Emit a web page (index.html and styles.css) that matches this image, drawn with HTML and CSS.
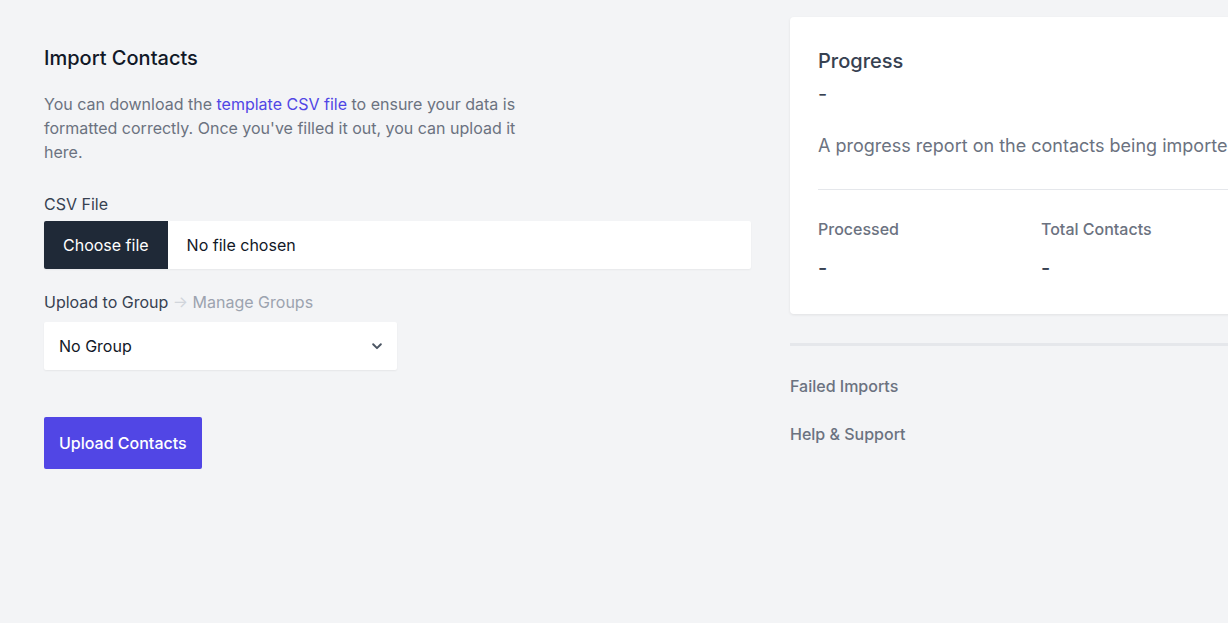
FILE: index.html
```html
<!DOCTYPE html>
<html>
<head>
<meta charset="utf-8">
<link rel="stylesheet" href="styles.css">
</head>
<body>
<div class="page">
  <main class="main">
    <h1 class="title">Import Contacts</h1>
    <p class="intro">You can download the <a class="link" href="#">template CSV file</a> to ensure your data is formatted correctly. Once you've filled it out, you can upload it here.</p>
    <div class="field field-csv">
      <div class="label">CSV File</div>
      <div class="file">
        <span class="file-btn">Choose file</span>
        <span class="file-name">No file chosen</span>
      </div>
    </div>
    <div class="field field-group">
      <div class="label label-group">Upload to Group <span class="arrow">&rarr;</span> <a class="manage" href="#">Manage Groups</a></div>
      <div class="select">
        <span>No Group</span>
        <svg class="chev" width="14" height="14" viewBox="0 0 20 20"><path d="M4.5 7.5l5.5 5.5 5.5-5.5" fill="none" stroke="#4b5563" stroke-width="2.8" stroke-linecap="round" stroke-linejoin="round"/></svg>
      </div>
    </div>
    <button class="upload">Upload Contacts</button>
  </main>
  <aside class="side">
    <section class="card">
      <h2 class="card-title">Progress</h2>
      <div class="card-dash">-</div>
      <p class="card-desc">A progress report on the contacts being imported.</p>
      <div class="stats">
        <div class="stat">
          <div class="stat-label">Processed</div>
          <div class="stat-value">-</div>
        </div>
        <div class="stat">
          <div class="stat-label">Total Contacts</div>
          <div class="stat-value">-</div>
        </div>
      </div>
    </section>
    <nav class="links">
      <a href="#" class="side-link">Failed Imports</a>
      <a href="#" class="side-link">Help &amp; Support</a>
    </nav>
  </aside>
</div>
</body>
</html>
```

FILE: styles.css
```css
html, body {
  margin: 0;
  padding: 0;
  background: #f3f4f6;
  overflow: hidden;
  width: 1228px;
  height: 623px;
}
body {
  font-family: "Inter", "Noto Sans", sans-serif;
  color: #374151;
}
.page {
  display: flex;
  gap: 39px;
  padding-left: 44px;
  width: 1600px;
}
.main {
  width: 707px;
  flex: none;
  padding-top: 44px;
}
.title {
  margin: 0;
  font-size: 20px;
  line-height: 28px;
  font-weight: 500;
  color: #111827;
}
.intro {
  margin: 20px 0 0;
  width: 480px;
  font-size: 16px;
  line-height: 24px;
  color: #6b7280;
}
.link {
  color: #5046e5;
  text-decoration: none;
}
.field-csv {
  margin-top: 28px;
}
.label {
  font-size: 16px;
  line-height: 24px;
  color: #374151;
  margin-bottom: 5px;
}
.label-group {
  margin-bottom: 8px;
}
.arrow {
  color: #d1d5db;
}
.manage {
  color: #9ca3af;
  text-decoration: none;
}
.file {
  display: flex;
  height: 48px;
  background: #fff;
  border-radius: 2px;
  box-shadow: 0 1px 2px rgba(0,0,0,0.05);
  overflow: hidden;
}
.file-btn {
  display: flex;
  align-items: center;
  background: #1f2937;
  color: #fff;
  padding: 0 19px;
  font-size: 16px;
  white-space: nowrap;
  flex: none;
}
.file-name {
  display: flex;
  align-items: center;
  padding-left: 19px;
  font-size: 16px;
  color: #111827;
}
.field-group {
  margin-top: 21px;
}
.select {
  width: 325px;
  height: 48px;
  background: #fff;
  border-radius: 2px;
  box-shadow: 0 1px 2px rgba(0,0,0,0.06);
  display: flex;
  align-items: center;
  justify-content: space-between;
  padding: 0 13px 0 15px;
  font-size: 16px;
  color: #111827;
}
.upload {
  margin-top: 47px;
  display: block;
  background: #5146e5;
  color: #fff;
  border: none;
  border-radius: 2px;
  height: 52px;
  padding: 0 15px;
  font-family: inherit;
  font-size: 16px;
  font-weight: 500;
}
.side {
  width: 707px;
  flex: none;
  padding-top: 17px;
}
.card {
  background: #fff;
  border-radius: 4px;
  box-shadow: 0 1px 3px rgba(0,0,0,0.08);
  padding: 35px 28px 32px;
}
.card-title {
  margin: 0;
  font-size: 20px;
  line-height: 28px;
  font-weight: 500;
  color: #374151;
  margin-top: -5px;
}
.card-dash {
  font-size: 20px;
  line-height: 28px;
  color: #374151;
  margin-top: 5px;
}
.card-desc {
  margin: 24px 0 0;
  font-size: 18px;
  line-height: 28px;
  color: #6b7280;
  white-space: nowrap;
  padding-bottom: 29px;
  border-bottom: 1px solid #e5e7eb;
}
.stats {
  display: flex;
  padding-top: 27px;
}
.stat {
  width: 223px;
}
.stat-label {
  font-size: 16px;
  line-height: 24px;
  font-weight: 500;
  color: #6b7280;
}
.stat-value {
  margin-top: 13px;
  font-size: 20px;
  line-height: 28px;
  font-weight: 500;
  color: #374151;
}
.links {
  margin-top: 29px;
  border-top: 3px solid #e5e7eb;
  padding-top: 28px;
  display: flex;
  flex-direction: column;
  gap: 24px;
}
.side-link {
  font-size: 16px;
  line-height: 24px;
  font-weight: 500;
  color: #6b7280;
  text-decoration: none;
}
```
